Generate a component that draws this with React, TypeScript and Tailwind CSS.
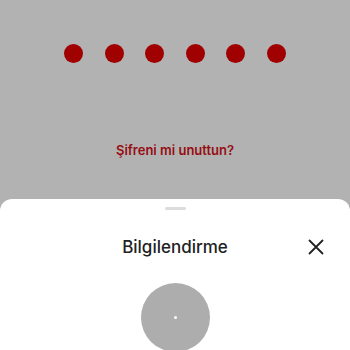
export default function App() {
  const dots = [0, 1, 2, 3, 4, 5];

  return (
    <div
      className="w-[350px] h-[350px] overflow-hidden bg-[#b2b2b2] flex flex-col"
      style={{ fontFamily: "Inter, 'Noto Sans', sans-serif" }}
    >
      {/* pin entry */}
      <div className="h-[199px] shrink-0 flex flex-col items-center">
        <div className="mt-[44px] flex gap-[21.6px]">
          {dots.map((d) => (
            <div key={d} className="w-[19px] h-[19px] rounded-full bg-[#a00000]" />
          ))}
        </div>
        <p className="mt-[81px] text-[13px] font-semibold text-[#960d12] leading-none">
          Şifreni mi unuttun?
        </p>
      </div>

      {/* bottom sheet */}
      <div className="flex-1 bg-white rounded-t-[12px] flex flex-col items-center">
        <div className="mt-[8px] w-[21px] h-[3px] rounded-full bg-[#dcdcdc]" />
        <div className="relative w-full mt-[25px] flex items-center justify-center h-[24px]">
          <h2 className="text-[17px] font-medium text-[#222] leading-none">Bilgilendirme</h2>
          <button className="absolute right-[26px] top-1/2 -translate-y-1/2 text-[#222]">
            <svg width="16" height="16" viewBox="0 0 16 16" fill="none">
              <path d="M1.5 1.5L14.5 14.5M14.5 1.5L1.5 14.5" stroke="currentColor" strokeWidth="1.8" strokeLinecap="round" />
            </svg>
          </button>
        </div>
        <div className="mt-[24px] w-[69px] h-[69px] shrink-0 rounded-full bg-[#adadad] flex items-center justify-center">
          <div className="w-[3px] h-[3px] rounded-full bg-white" />
        </div>
      </div>
    </div>
  );
}
